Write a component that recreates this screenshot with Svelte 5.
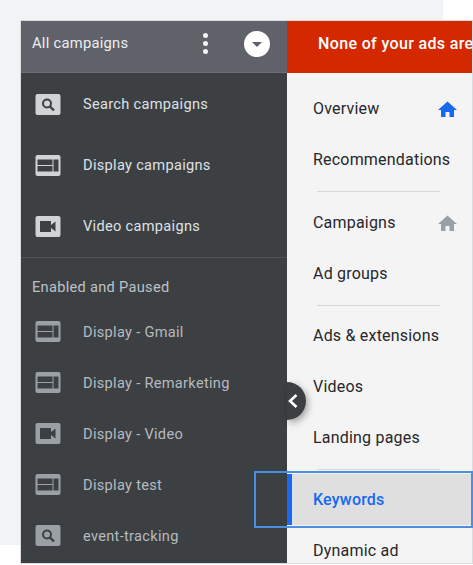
<script>
  const top = [
    { icon: 'search', label: 'Search campaigns' },
    { icon: 'display', label: 'Display campaigns' },
    { icon: 'video', label: 'Video campaigns' }
  ];
  const campaigns = [
    { icon: 'display', label: 'Display - Gmail' },
    { icon: 'display', label: 'Display - Remarketing' },
    { icon: 'video', label: 'Display - Video' },
    { icon: 'display', label: 'Display test' },
    { icon: 'search', label: 'event-tracking' }
  ];
  const homePath = 'M9.5 0.5 L0 9 H3 V16 H7.5 V11 H11.5 V16 H16 V9 H19 Z';
</script>

{#snippet badge(kind)}
  <svg class="badge" width="26" height="21" viewBox="0 0 26 21" aria-hidden="true">
    <rect x="0.5" y="0" width="25" height="21" rx="2" fill="currentColor" />
    {#if kind === 'search'}
      <circle class="cut" cx="12" cy="9.5" r="4" fill="none" stroke-width="2" />
      <path class="cut" d="M15 12.5 L19 16.5" stroke-width="2.4" fill="none" />
    {:else if kind === 'display'}
      <rect class="ink" x="2.5" y="4.5" width="15" height="5.5" />
      <rect class="ink" x="2.5" y="11" width="15" height="5.5" />
      <rect class="ink" x="18.5" y="4.5" width="5" height="12" />
    {:else}
      <path class="ink" d="M5 5 H16 V9 L20.5 5.5 V15.5 L16 12 V16 H5 Z" />
    {/if}
  </svg>
{/snippet}

<div class="page">
  <div class="backdrop"></div>
  <div class="window">
    <aside class="side">
      <header class="head">
        <span class="head-title">All campaigns</span>
        <span class="dots"><i></i><i></i><i></i></span>
        <span class="drop"><b></b></span>
      </header>
      <nav class="top">
        {#each top as item}
          <div class="top-row">
            {@render badge(item.icon)}
            <span>{item.label}</span>
          </div>
        {/each}
      </nav>
      <div class="section">Enabled and Paused</div>
      <nav class="list">
        {#each campaigns as item}
          <div class="list-row">
            {@render badge(item.icon)}
            <span>{item.label}</span>
          </div>
        {/each}
      </nav>
    </aside>
    <main class="main">
      <div class="alert">None of your ads are</div>
      <nav class="menu">
        <div class="mi">Overview
          <svg class="home blue" width="19" height="16" viewBox="0 0 19 16"><path d={homePath} /></svg>
        </div>
        <div class="mi">Recommendations</div>
        <hr />
        <div class="mi">Campaigns
          <svg class="home grey" width="19" height="16" viewBox="0 0 19 16"><path d={homePath} /></svg>
        </div>
        <div class="mi">Ad groups</div>
        <hr class="tight" />
        <div class="mi">Ads &amp; extensions</div>
        <div class="mi">Videos</div>
        <div class="mi">Landing pages</div>
        <hr />
        <div class="mi active">Keywords</div>
        <div class="mi last">Dynamic ad</div>
      </nav>
    </main>
    <div class="collapse">
      <svg width="12" height="16" viewBox="0 0 12 16"><path d="M9.5 2 L3 8 L9.5 14" fill="none" stroke="#fff" stroke-width="2.6" /></svg>
    </div>
    <div class="focus"></div>
  </div>
</div>

<style>
  :global(body) { margin: 0; background: #fff; }
  .page {
    position: relative;
    width: 473px;
    height: 565px;
    overflow: hidden;
    font-family: Roboto, "Liberation Sans", sans-serif;
  }
  .backdrop {
    position: absolute;
    left: 0;
    top: 0;
    width: 443px;
    height: 545px;
    background: #f1f3f5;
  }
  .window {
    position: absolute;
    left: 20px;
    top: 20px;
    width: 453px;
    height: 544px;
    box-sizing: border-box;
    border: 1px solid #dadce0;
    display: grid;
    grid-template-columns: 266px 1fr;
    background: #f4f4f5;
  }
  .side {
    background: #3c4043;
    color: #e8eaed;
    overflow: hidden;
  }
  .head {
    height: 52px;
    box-sizing: border-box;
    background: #5f6269;
    border-bottom: 1px solid #6b6e74;
    display: flex;
    align-items: center;
    padding: 0 17px 6px 11px;
    color: #eceef0;
    font-size: 14.75px;
    letter-spacing: 0.25px;
  }
  .head-title { flex: 1; padding-bottom: 2px; }
  .dots {
    display: flex;
    flex-direction: column;
    gap: 3px;
    margin-right: 36px;
  }
  .dots i {
    width: 5px;
    height: 5px;
    border-radius: 50%;
    background: #f1f3f4;
  }
  .drop {
    width: 26px;
    height: 26px;
    border-radius: 50%;
    background: #fff;
    display: flex;
    align-items: center;
    justify-content: center;
  }
  .drop b {
    width: 0;
    height: 0;
    margin-top: 2px;
    border-left: 5px solid transparent;
    border-right: 5px solid transparent;
    border-top: 5px solid #5f6368;
  }
  .top {
    border-bottom: 1px solid #4e5155;
    padding-top: 1px;
    height: 185px;
    box-sizing: border-box;
  }
  .top-row {
    height: 61px;
    display: flex;
    align-items: center;
    padding-left: 14px;
    gap: 22px;
    color: #dfe1e4;
    font-size: 14.6px;
    letter-spacing: 0.3px;
  }
  .top-row span { padding-bottom: 2px; }
  .top-row .badge { color: #d2d3d5; }
  .section {
    height: 48px;
    box-sizing: border-box;
    padding: 10px 0 0 11px;
    display: flex;
    align-items: center;
    color: #bdc1c6;
    font-size: 14.6px;
    letter-spacing: 0.3px;
  }
  .list-row {
    height: 51px;
    display: flex;
    align-items: center;
    padding-left: 14px;
    gap: 22px;
    color: #b6babf;
    font-size: 14.6px;
    letter-spacing: 0.3px;
  }
  .list-row .badge { color: #9aa0a6; }
  .badge { flex: none; }
  .badge :global(.ink) { fill: #3c4043; }
  .badge :global(.cut) { stroke: #3c4043; }
  .main { min-width: 0; overflow: hidden; }
  .alert {
    height: 52px;
    box-sizing: border-box;
    background: #d42800;
    color: #fff;
    font-size: 16px;
    font-weight: 500;
    letter-spacing: 0.35px;
    padding: 13px 0 0 31px;
    white-space: nowrap;
  }
  .menu { padding-top: 9px; }
  .mi {
    height: 51px;
    display: flex;
    align-items: center;
    justify-content: space-between;
    padding: 2px 15px 0 26px;
    box-sizing: border-box;
    color: #26272a;
    font-size: 16px;
    letter-spacing: 0.2px;
  }
  .mi.last { padding-top: 0; }
  .mi.active {
    color: #1669f0;
    font-weight: 500;
    background: #dfdfdf;
    border-left: 5px solid #1669f0;
    padding: 0 15px 0 21px;
  }
  hr {
    margin: 7px 32px 4px 30px;
    border: 0;
    border-top: 1px solid #d5d7da;
    height: 0;
  }
  hr.tight { margin-bottom: 3px; }
  .home.blue { fill: #1669f0; }
  .home.grey { fill: #9aa0a6; }
  .collapse {
    position: absolute;
    left: 266px;
    top: 361px;
    width: 19px;
    height: 38px;
    background: #3c4043;
    border-radius: 0 19px 19px 0;
    box-shadow: 2px 3px 7px rgba(0, 0, 0, 0.35);
    display: flex;
    align-items: center;
    z-index: 2;
  }
  .focus {
    position: absolute;
    left: 233px;
    top: 450px;
    width: 219px;
    height: 57px;
    box-sizing: border-box;
    border: 2px solid #4a90e2;
    z-index: 3;
  }
</style>
